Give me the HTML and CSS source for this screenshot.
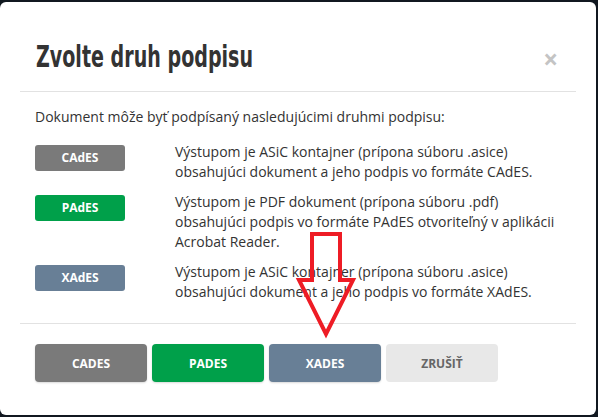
FILE: index.html
```html
<!DOCTYPE html>
<html lang="sk">
<head>
  <meta charset="UTF-8">
  <title>Zvolte druh podpisu</title>
  <link rel="stylesheet" href="styles.css">
</head>
<body>
  <div class="modal">
    <div class="modal-header">
      <h2>Zvolte druh podpisu</h2>
      <span class="close">&times;</span>
    </div>

    <div class="modal-body">
      <p class="intro">Dokument môže byť podpísaný nasledujúcimi druhmi podpisu:</p>

      <div class="row">
        <span class="badge cades">CAdES</span>
        <p>Výstupom je ASiC kontajner (prípona súboru .asice) obsahujúci dokument a jeho podpis vo formáte CAdES.</p>
      </div>
      <div class="row">
        <span class="badge pades">PAdES</span>
        <p>Výstupom je PDF dokument (prípona súboru .pdf) obsahujúci podpis vo formáte PAdES otvoriteľný v aplikácii Acrobat Reader.</p>
      </div>
      <div class="row">
        <span class="badge xades">XAdES</span>
        <p>Výstupom je ASiC kontajner (prípona súboru .asice) obsahujúci dokument a jeho podpis vo formáte XAdES.</p>
      </div>
    </div>

    <div class="modal-footer">
      <button class="btn cades">CADES</button>
      <button class="btn pades">PADES</button>
      <button class="btn xades">XADES</button>
      <button class="btn cancel">ZRUŠIŤ</button>
    </div>

    <svg class="arrow" width="64" height="110" viewBox="0 0 64 110">
      <path d="M18 2 H46 V48 H59 L32 102 L5 48 H18 Z" fill="none" stroke="#ee1c25" stroke-width="4" stroke-linejoin="miter"/>
    </svg>
  </div>
</body>
</html>
```

FILE: styles.css
```css
body {
  margin: 0;
  background: #111820;
  font-family: 'Open Sans', 'DejaVu Sans', sans-serif;
  color: #333;
  height: 417px;
  overflow: hidden;
}

.modal {
  position: relative;
  margin: 2px 2px 0 0;
  height: 413px;
  background: #fff;
  border-radius: 6px;
  box-sizing: border-box;
}

.modal-header {
  display: flex;
  align-items: center;
  justify-content: space-between;
  margin: 0 20px;
  padding: 18px 16px 0 16px;
  height: 90px;
  box-sizing: border-box;
  border-bottom: 1px solid #e2e2e2;
}

h2 {
  margin: 0;
  font-family: 'DejaVu Sans', sans-serif;
  font-stretch: condensed;
  font-weight: bold;
  font-size: 31px;
  color: #333;
  transform: scaleX(0.684);
  transform-origin: left center;
  white-space: nowrap;
}

.close {
  font-size: 26px;
  font-weight: bold;
  color: #c4c4c4;
  line-height: 1;
  margin-right: 2px;
  margin-top: 6px;
}

.modal-body {
  padding: 15px 36px 11px 35px;
  font-size: 14px;
  line-height: 20px;
}

.modal-body p {
  margin: 0;
}

.modal-body .intro {
  margin-bottom: 15px;
}

.row {
  display: flex;
  align-items: flex-start;
  gap: 50px;
  margin-bottom: 10px;
}

.badge {
  flex: none;
  width: 90px;
  height: 26px;
  margin-top: 3px;
  border-radius: 3px;
  color: #fff;
  font-size: 12px;
  font-weight: bold;
  text-align: center;
  line-height: 26px;
}

.cades { background: #7a7a7a; }
.pades { background: #00a04a; }
.xades { background: #687f96; }

.modal-footer {
  margin: 0 20px;
  padding: 20px 15px;
  border-top: 1px solid #e2e2e2;
  display: flex;
  gap: 5px;
}

.btn {
  width: 112px;
  height: 38px;
  border: none;
  border-radius: 4px;
  color: #fff;
  font-family: 'Open Sans', sans-serif;
  font-size: 12px;
  font-weight: bold;
  box-shadow: 0 1px 2px rgba(0,0,0,0.15);
}

.btn.cancel {
  background: #e8e8e8;
  color: #666;
  box-shadow: none;
}

.arrow {
  position: absolute;
  left: 294px;
  top: 230px;
}
```
